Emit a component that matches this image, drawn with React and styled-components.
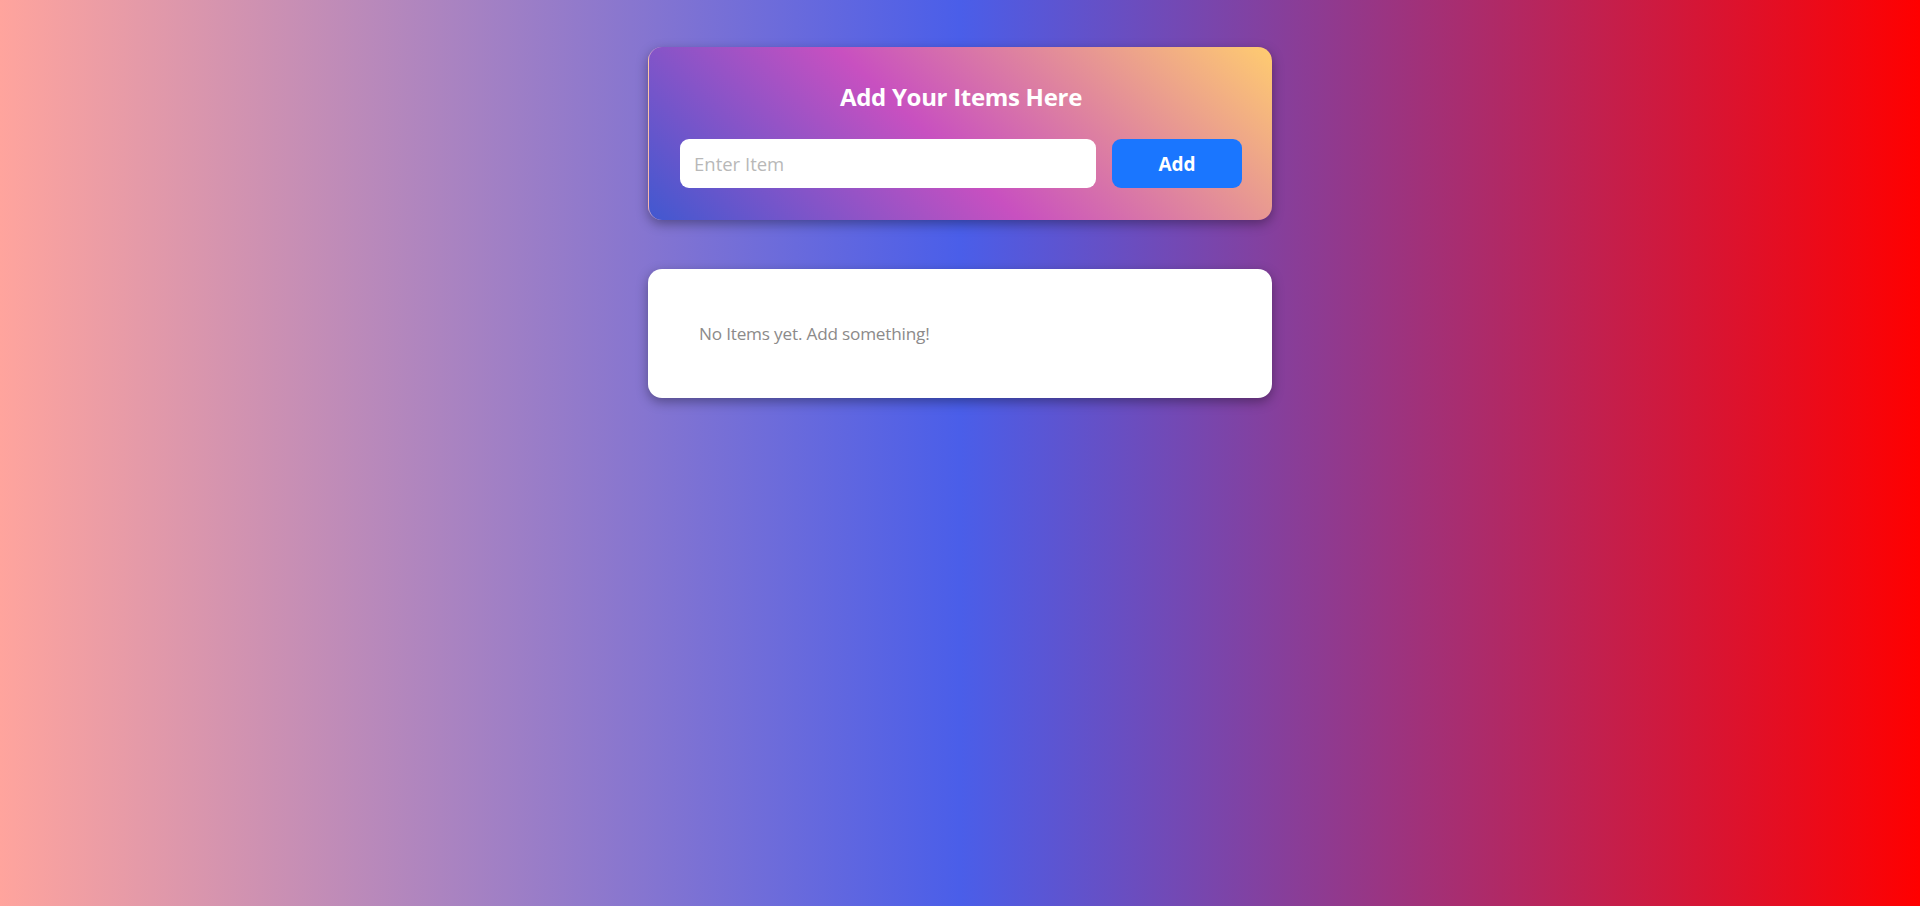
import { useState } from "react";
import styled, { createGlobalStyle } from "styled-components";

const GlobalStyle = createGlobalStyle`
  * {
    box-sizing: border-box;
  }

  html,
  body {
    margin: 0;
    padding: 0;
    height: 100%;
  }

  body {
    font-family: "Open Sans", "Noto Sans", sans-serif;
    background: linear-gradient(to right, #ffa49d, #4a5ee9, #ff0000);
    min-height: 906px;
  }
`;

const Page = styled.main`
  display: flex;
  flex-direction: column;
  align-items: center;
  gap: 49px;
  padding-top: 47px;
`;

const FormCard = styled.section`
  width: 624px;
  padding: 35px 30px 32px 31px;
  border-radius: 14px;
  border-left: 1px solid rgba(255, 200, 200, 0.6);
  background-image: linear-gradient(43deg, #4158d0 0%, #c850c0 46%, #ffcc70 100%);
  box-shadow: 0 4px 12px rgba(0, 0, 0, 0.35);
  display: flex;
  flex-direction: column;
  gap: 27px;
`;

const Title = styled.h2`
  margin: 0;
  color: #fff;
  text-align: center;
  font-size: 24px;
  line-height: 30px;
  font-weight: 700;
  letter-spacing: -0.3px;
`;

const Row = styled.form`
  display: flex;
  gap: 16px;
`;

const Input = styled.input`
  flex: 1;
  height: 49px;
  border: none;
  border-radius: 9px;
  padding: 0 14px;
  font-family: inherit;
  font-size: 18.5px;
  color: #333;
  outline: none;
  background: #fff;

  &::placeholder {
    color: #b8b8b8;
  }
`;

const AddButton = styled.button`
  width: 130px;
  height: 49px;
  border: none;
  border-radius: 9px;
  background: #1a76ff;
  color: #fff;
  font-family: inherit;
  font-size: 19px;
  font-weight: 700;
  cursor: pointer;
`;

const ListCard = styled.section`
  width: 624px;
  min-height: 129px;
  background: #fff;
  border-radius: 14px;
  box-shadow: 0 4px 12px rgba(0, 0, 0, 0.35);
  display: flex;
  align-items: center;
  padding: 0 40px 0 51px;
`;

const List = styled.ul`
  list-style: none;
  margin: 0;
  padding: 0;
  width: 100%;
`;

const Empty = styled.p`
  margin: 0;
  color: #8c8a8a;
  font-size: 17.2px;
  letter-spacing: -0.2px;
`;

const Item = styled.li`
  padding: 8px 0;
  font-size: 17px;
  color: #333;
`;

export default function App() {
  const [items, setItems] = useState([]);
  const [text, setText] = useState("");

  function addItem(e) {
    e.preventDefault();
    if (!text.trim()) return;
    setItems([...items, text.trim()]);
    setText("");
  }

  return (
    <>
      <GlobalStyle />
      <Page>
        <FormCard>
          <Title>Add Your Items Here</Title>
          <Row onSubmit={addItem}>
            <Input
              placeholder="Enter Item"
              value={text}
              onChange={(e) => setText(e.target.value)}
            />
            <AddButton type="submit">Add</AddButton>
          </Row>
        </FormCard>

        <ListCard>
          {items.length === 0 ? (
            <Empty>No Items yet. Add something!</Empty>
          ) : (
            <List>
              {items.map((item, i) => (
                <Item key={i}>{item}</Item>
              ))}
            </List>
          )}
        </ListCard>
      </Page>
    </>
  );
}
